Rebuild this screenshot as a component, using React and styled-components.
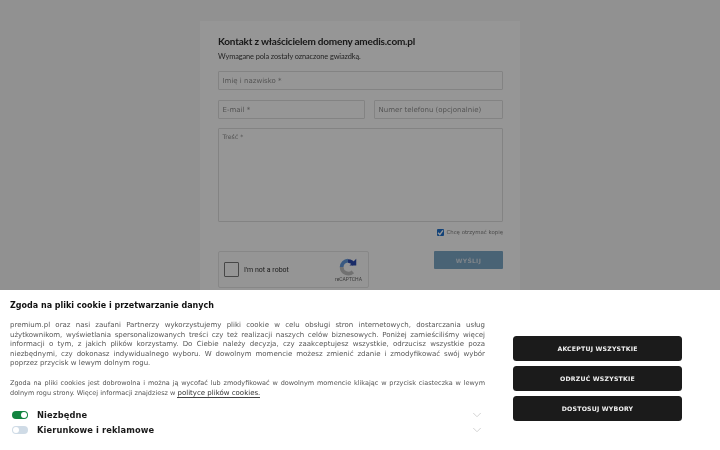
import React from 'react';
import styled, { createGlobalStyle } from 'styled-components';
import { ChevronDown } from 'lucide-react';

const Global = createGlobalStyle`
    html, body {
        margin: 0;
        height: 100%;
        overflow: hidden;
        background: #f2f2f2;
        font-family: "DejaVu Sans", sans-serif;
    }
    * { box-sizing: border-box; }
`;

export default function App() {
    return (
        <>
            <Global />
            <Page>
                <Card>
                    <Title>Kontakt z właścicielem domeny amedis.com.pl</Title>
                    <Hint>Wymagane pola zostały oznaczone gwiazdką.</Hint>
                    <Field>Imię i nazwisko *</Field>
                    <Row>
                        <Field $width="147px">E-mail *</Field>
                        <Field $width="129px">Numer telefonu (opcjonalnie)</Field>
                    </Row>
                    <Area>Treść *</Area>
                    <CopyRow>
                        <Check>
                            <svg width="7" height="7" viewBox="0 0 10 10" fill="none" stroke="#fff" strokeWidth="2">
                                <path d="M1.5 5.5 4 8l4.500-6" />
                            </svg>
                        </Check>
                        Chcę otrzymać kopię
                    </CopyRow>
                    <Bottom>
                        <Captcha>
                            <CaptchaBox />
                            <CaptchaLabel>I'm not a robot</CaptchaLabel>
                            <CaptchaLogo>
                                <svg width="18" height="18" viewBox="0 0 24 24" fill="none" strokeWidth="5">
                                    <path d="M12 4a9 9 0 0 1 8 5" stroke="#2b49ad" />
                                    <path d="M3.500 12A9 9 0 0 1 12 3.500" stroke="#5f95d8" />
                                    <path d="M3.500 12a9 9 0 0 0 15 6.500" stroke="#bdbdbd" />
                                    <path d="M14 10h9V1z" fill="#2b49ad" strokeWidth="0" />
                                </svg>
                                <span>reCAPTCHA</span>
                            </CaptchaLogo>
                        </Captcha>
                        <Send>WYŚLIJ</Send>
                    </Bottom>
                </Card>
            </Page>
            <Overlay />
            <Banner>
                <Content>
                    <Heading>Zgoda na pliki cookie i przetwarzanie danych</Heading>
                    <Paragraph>
                        premium.pl oraz nasi zaufani Partnerzy wykorzystujemy pliki cookie w celu obsługi stron internetowych, dostarczania usług użytkownikom, wyświetlania spersonalizowanych treści czy też realizacji naszych celów biznesowych. Poniżej zamieściliśmy więcej informacji o tym, z jakich plików korzystamy. Do Ciebie należy decyzja, czy zaakceptujesz wszystkie, odrzucisz wszystkie poza niezbędnymi, czy dokonasz indywidualnego wyboru. W dowolnym momencie możesz zmienić zdanie i zmodyfikować swój wybór poprzez przycisk w lewym dolnym rogu.
                    </Paragraph>
                    <Paragraph $small>
                        Zgoda na pliki cookies jest dobrowolna i można ją wycofać lub zmodyfikować w dowolnym momencie klikając w przycisk ciasteczka w lewym dolnym rogu strony. Więcej informacji znajdziesz w <PolicyLink>polityce plików cookies.</PolicyLink>
                    </Paragraph>
                    <Consents>
                        <Consent>
                            <Toggle $on />
                            <ConsentName>Niezbędne</ConsentName>
                            <ChevronDown size={14} color="#cdcdcd" strokeWidth={1.500} />
                        </Consent>
                        <Consent>
                            <Toggle />
                            <ConsentName>Kierunkowe i reklamowe</ConsentName>
                            <ChevronDown size={14} color="#cdcdcd" strokeWidth={1.500} />
                        </Consent>
                    </Consents>
                </Content>
                <Actions>
                    <ActionButton>AKCEPTUJ WSZYSTKIE</ActionButton>
                    <ActionButton>ODRZUĆ WSZYSTKIE</ActionButton>
                    <ActionButton>DOSTOSUJ WYBORY</ActionButton>
                </Actions>
            </Banner>
        </>
    );
}

const Page = styled.div`
    display: flex;
    justify-content: center;
    padding-top: 21px;
    filter: blur(0.4px);
`;
const Card = styled.div`
    width: 320px;
    height: 300px;
    padding: 14px 17px 0 18px;
    background: #fbfbfb;
`;
const Title = styled.h2`
    margin: 0;
    font: 700 10px/12px "Lato", sans-serif;
    letter-spacing: -0.200px;
    color: #2a2a2a;
`;
const Hint = styled.p`
    margin: 5px 0 9px;
    font: 400 7.400px/10px "Lato", sans-serif;
    letter-spacing: -0.100px;
    color: #3c3c3c;
`;
const Field = styled.div`
    width: ${p => p.$width || '285px'};
    height: 19px;
    padding: 0 3.500px;
    border: 1px solid #dadada;
    border-radius: 1px;
    font-size: 7px;
    line-height: 18px;
    color: #8c8c8c;
    white-space: nowrap;
    overflow: hidden;
`;
const Row = styled.div`
    display: flex;
    justify-content: space-between;
    width: 285px;
    margin: 10px 0 9px;
`;
const Area = styled(Field)`
    height: 94px;
    font-size: 6.200px;
    line-height: 16px;
`;
const CopyRow = styled.div`
    display: flex;
    justify-content: flex-end;
    align-items: center;
    gap: 2px;
    width: 285px;
    margin-top: 7px;
    font-size: 5.400px;
    line-height: 7px;
    color: #7c7c7c;
`;
const Check = styled.span`
    display: flex;
    align-items: center;
    justify-content: center;
    width: 7px;
    height: 7px;
    border-radius: 1px;
    background: #1f6fc8;
`;
const Bottom = styled.div`
    display: flex;
    justify-content: space-between;
    align-items: flex-start;
    width: 285px;
    margin-top: 15px;
`;
const Captcha = styled.div`
    display: flex;
    align-items: center;
    width: 151px;
    height: 37px;
    padding: 0 6px 0 5px;
    border: 1px solid #e2e2e2;
    border-radius: 2px;
    background: #f8f8f8;
`;
const CaptchaBox = styled.span`
    width: 15px;
    height: 15px;
    border: 1px solid #777;
    border-radius: 1px;
    background: #f8f8f8;
`;
const CaptchaLabel = styled.span`
    flex: 1;
    margin-left: 5px;
    font: 400 7px "Roboto", sans-serif;
    color: #333;
`;
const CaptchaLogo = styled.div`
    display: flex;
    flex-direction: column;
    align-items: center;
    font: 400 5px "Roboto", sans-serif;
    color: #666;
`;
const Send = styled.button`
    width: 69px;
    height: 18px;
    padding: 0;
    border: 0;
    border-radius: 1px;
    background: #7ba5c3;
    color: #d3dde6;
    font: 700 6px "DejaVu Sans", sans-serif;
    letter-spacing: 0.300px;
`;
const Overlay = styled.div`
    position: fixed;
    inset: 0;
    background: rgba(0, 0, 0, 0.4);
`;
const Banner = styled.div`
    position: fixed;
    left: 0;
    right: 0;
    bottom: 0;
    height: 160px;
    display: flex;
    background: #fff;
    filter: blur(0.3px);
`;
const Content = styled.div`
    width: 485px;
    padding: 10px 0 0 10px;
`;
const Heading = styled.h3`
    margin: 0 0 10px;
    font: 700 8px/11px "DejaVu Sans", sans-serif;
    color: #111;
`;
const Paragraph = styled.p`
    margin: 0 0 10px;
    font-size: ${p => (p.$small ? '6.500px' : '7px')};
    line-height: 9.600px;
    text-align: justify;
    color: #555;
`;
const PolicyLink = styled.span`
    font-size: 7px;
    line-height: 9px;
    color: #333;
    border-bottom: 1px solid #444;
`;
const Consents = styled.div`
    display: flex;
    flex-direction: column;
    gap: 4px;
    margin-top: 11.500px;
`;
const Consent = styled.div`
    display: flex;
    align-items: center;
    height: 11px;
    padding: 0 1px 0 2px;
`;
const Toggle = styled.span`
    position: relative;
    width: 16px;
    height: 8px;
    border-radius: 4px;
    background: ${p => (p.$on ? '#12843f' : '#cfdbe6')};
    &::after {
        content: '';
        position: absolute;
        top: 1px;
        left: ${p => (p.$on ? '9px' : '1px')};
        width: 6px;
        height: 6px;
        border-radius: 50%;
        background: #fff;
    }
`;
const ConsentName = styled.span`
    flex: 1;
    margin-left: 9px;
    font-size: 8.300px;
    font-weight: 700;
    letter-spacing: 0.100px;
    color: #1a1a1a;
`;
const Actions = styled.div`
    display: flex;
    flex-direction: column;
    gap: 5.500px;
    margin: 46px 0 0 28px;
`;
const ActionButton = styled.button`
    width: 169px;
    height: 24.500px;
    padding: 0;
    border: 0;
    border-radius: 3.500px;
    background: #1b1b1b;
    color: #f2f2f2;
    font: 700 6.200px "DejaVu Sans", sans-serif;
    letter-spacing: 0.200px;
`;
